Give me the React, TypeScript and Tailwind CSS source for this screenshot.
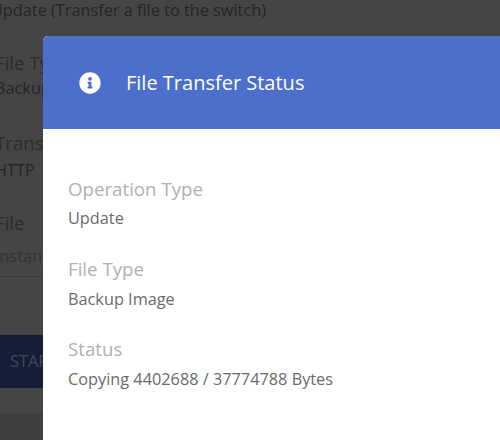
import { FaInfoCircle } from "react-icons/fa";

function BgField({ label, value, gapClass, valueClass }: { label: string; value: string; gapClass: string; valueClass: string }) {
  return (
    <div className="flex h-[80px] flex-col">
      <div className="text-[18.7px] leading-[26px] text-[#2c2c2c]">{label}</div>
      <div className={`text-[16.3px] leading-[22px] ${gapClass} ${valueClass}`}>{value}</div>
    </div>
  );
}

function Field({ label, value, gapClass }: { label: string; value: string; gapClass: string }) {
  return (
    <div className="flex h-[80px] flex-col">
      <div className="text-[18.7px] leading-[26px] text-[#b0b0b0]">{label}</div>
      <div className={`text-[16.3px] leading-[22px] text-[#6a6a6a] ${gapClass}`}>{value}</div>
    </div>
  );
}

export default function App() {
  return (
    <div className="relative h-[440px] w-[500px] overflow-hidden bg-[#454545] font-['Open_Sans',sans-serif]">
      <div className="flex h-full flex-col">
        <div className="-ml-[9px] text-[16.3px] leading-[20px] text-[#262626]">Update (Transfer a file to the switch)</div>
        <div className="-ml-[5px] mt-[30px] flex flex-col">
          <BgField label="File Type" value="Backup Image" gapClass="mt-[1px]" valueClass="text-[#262626]" />
          <BgField label="Transfer" value="HTTP" gapClass="mt-[3px]" valueClass="text-[#262626]" />
          <BgField label="File" value="Instance" gapClass="mt-[9px]" valueClass="text-[#333333]" />
        </div>
        <div className="-mt-[14px] h-px w-[43px] bg-[#3a3a3a]" />
        <div className="mt-[58px] flex h-[53px] w-[43px] items-center overflow-hidden bg-[#141e38] pl-[10px] text-[16.3px] text-[#444a58]">STAR</div>
        <div className="mt-[25px] flex-1 bg-[#3f3f3f]" />
      </div>
      <div className="absolute left-[43px] top-[36px] h-[420px] w-[480px] overflow-hidden rounded-tl-[5px] bg-white">
        <div className="flex h-[93px] items-center bg-[#4c6fcc] pl-[36px] text-white">
          <FaInfoCircle size={22} color="white" />
          <div className="ml-[25px] pt-[1px] text-[20px] leading-[24px]">File Transfer Status</div>
        </div>
        <div className="flex flex-col pl-[25px] pt-[47px]">
          <Field label="Operation Type" value="Update" gapClass="mt-[5px]" />
          <Field label="File Type" value="Backup Image" gapClass="mt-[6px]" />
          <Field label="Status" value="Copying 4402688 / 37774788 Bytes" gapClass="mt-[6px]" />
        </div>
      </div>
    </div>
  );
}
